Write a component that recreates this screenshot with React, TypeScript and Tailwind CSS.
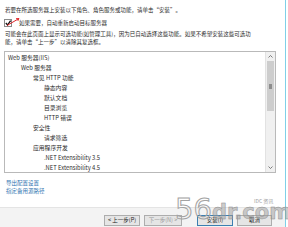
import React from "react";

const items = [
  { label: "Web 服务器(IIS)", indent: "pl-[3px]" },
  { label: "Web 服务器", indent: "pl-[16px]" },
  { label: "常见 HTTP 功能", indent: "pl-[28px]" },
  { label: "静态内容", indent: "pl-[39px]" },
  { label: "默认文档", indent: "pl-[39px]" },
  { label: "目录浏览", indent: "pl-[39px]" },
  { label: "HTTP 错误", indent: "pl-[39px]" },
  { label: "安全性", indent: "pl-[28px]" },
  { label: "请求筛选", indent: "pl-[39px]" },
  { label: "应用程序开发", indent: "pl-[28px]" },
  { label: ".NET Extensibility 3.5", indent: "pl-[39px]" },
  { label: ".NET Extensibility 4.5", indent: "pl-[39px]" },
];

const CheckIcon = () => (
  <svg width="20" height="11" viewBox="0 0 20 11" className="shrink-0">
    <rect x="0.5" y="2.5" width="7" height="7" fill="#fff" stroke="#8a8a8a" />
    <path d="M1.8 6 L3.6 8 L6.6 3.6" fill="none" stroke="#111" strokeWidth="1.3" />
    <path d="M3 8.5 L15 1.5" stroke="#e0262a" strokeWidth="1" />
    <path d="M15 1.5 L12 1.6 M15 1.5 L13.8 4" stroke="#e0262a" strokeWidth="0.9" />
  </svg>
);

const Chevron = ({ up }: { up?: boolean }) => (
  <svg width="5" height="3" viewBox="0 0 5 3">
    <path d={up ? "M0.5 2.5 L2.5 0.5 L4.5 2.5" : "M0.5 0.5 L2.5 2.5 L4.5 0.5"} fill="none" stroke="#606060" strokeWidth="0.8" />
  </svg>
);

interface BtnProps {
  label: string;
  width: string;
  disabled?: boolean;
  primary?: boolean;
}

const WizardButton: React.FC<BtnProps> = ({ label, width, disabled, primary }) => (
  <div
    className={`${width} h-[11px] flex items-center justify-center text-[5.5px] leading-none border bg-[#e5e5e5] ${
      primary ? "border-[#3c7fb1]" : "border-[#adadad]"
    } ${disabled ? "text-[#9a9a9a]" : "text-[#222]"}`}
  >
    {label}
  </div>
);

export default function App() {
  return (
    <div className="w-[288px] h-[227px] flex bg-white overflow-hidden relative font-['Noto_Sans_CJK_SC',sans-serif] text-[#2a2a2a]">
      <div className="w-[286px] flex flex-col border-r border-[#7fd0e8]">
        <div className="flex flex-col px-[4px] pt-[6px]">
          <p className="pl-[1px] text-[5.5px] leading-[8px] whitespace-nowrap">
            若要在所选服务器上安装以下角色、角色服务或功能，请单击“安装”。
          </p>

          <div className="flex items-center gap-[0px] mt-[4px] h-[9px]">
            <CheckIcon />
            <span className="text-[5.5px] leading-[8px] -ml-[5px] whitespace-nowrap">如果需要，自动重新启动目标服务器</span>
          </div>

          <p className="pl-[1px] mt-[3px] text-[5.5px] leading-[8px]">
            <span className="block whitespace-nowrap">可能会在此页面上显示可选功能(如管理工具)，因为已自动选择这些功能。如果不希望安装这些可选功</span>
            <span className="block whitespace-nowrap">能，请单击“上一步”以清除其复选框。</span>
          </p>

          <div className="mt-[5px] w-[272px] h-[122px] border border-[#b9b9b9] flex overflow-hidden">
            <div className="flex-1 flex flex-col pt-[1px]">
              {items.map((it) => (
                <div key={it.label} className={`${it.indent} text-[5.8px] leading-[10px] whitespace-nowrap`}>
                  {it.label}
                </div>
              ))}
            </div>
            <div className="w-[10px] flex flex-col bg-[#f0f0f0] border-l border-[#e2e2e2]">
              <div className="h-[9px] flex items-center justify-center">
                <Chevron up />
              </div>
              <div className="mx-[1px] h-[50px] bg-[#cdcdcd] flex items-center justify-center">
                <div className="w-[3px] h-[5px] bg-[#8d8d8d]" />
              </div>
              <div className="flex-1" />
              <div className="h-[9px] flex items-center justify-center">
                <Chevron />
              </div>
            </div>
          </div>

          <div className="mt-[6px] pl-[2px] flex flex-col text-[5.5px] leading-[8px] text-[#2f74b0]">
            <span>导出配置设置</span>
            <span>指定备用源路径</span>
          </div>
        </div>

        <div className="mt-auto h-[20px] bg-[#f3f3f3] border-t border-[#e4e4e4] flex items-end justify-end pr-[13px] pb-[1px]">
          <div className="flex items-center">
            <WizardButton label="< 上一步(P)" width="w-[36px]" />
            <div className="w-[4px]" />
            <WizardButton label="下一步(N) >" width="w-[38px]" disabled />
            <div className="w-[15px]" />
            <WizardButton label="安装(I)" width="w-[36px]" primary />
            <div className="w-[4px]" />
            <WizardButton label="取消" width="w-[35px]" />
          </div>
        </div>
      </div>

      {/* watermark */}
      <div className="absolute left-[175px] top-[195px] flex items-end pointer-events-none">
        <span className="text-[29px] leading-none font-['DejaVu_Sans',sans-serif] text-transparent [-webkit-text-stroke:1px_#a3a3a3]">
          56
        </span>
        <span className="text-[21px] leading-none font-['DejaVu_Sans',sans-serif] font-bold text-[#9c9c9c]/50 [-webkit-text-stroke:0.5px_#8f8f8f] mb-[1px]">
          dr.com
        </span>
      </div>
      <div className="absolute left-[254px] top-[198px] text-[5px] leading-none text-[#9a9a9a] whitespace-nowrap pointer-events-none">
        IDC 资讯
      </div>
    </div>
  );
}
